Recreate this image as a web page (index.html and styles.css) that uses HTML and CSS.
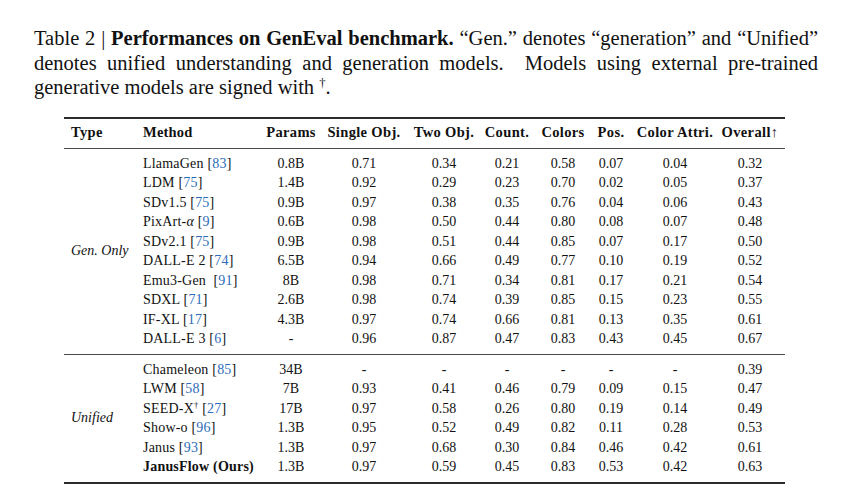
FILE: index.html
```html
<!DOCTYPE html>
<html lang="en">
<head>
<meta charset="utf-8">
<title>Table 2 | Performances on GenEval benchmark</title>
<link rel="stylesheet" href="styles.css">
</head>
<body>
<main class="page">
  <div class="caption">
    <div class="line just">Table 2 | <b>Performances on GenEval benchmark.</b> “Gen.” denotes “generation” and “Unified”</div>
    <div class="line just">denotes unified understanding and generation models.&nbsp; Models using external pre-trained</div>
    <div class="line">generative models are signed with <sup class="dag">†</sup>.</div>
  </div>

  <table class="results">
    <colgroup>
      <col class="c-type"><col class="c-method"><col class="c-params"><col class="c-single"><col class="c-two"><col class="c-count"><col class="c-colors"><col class="c-pos"><col class="c-attr"><col class="c-overall">
    </colgroup>
    <thead>
      <tr>
        <th class="left type">Type</th>
        <th class="left method">Method</th>
        <th>Params</th>
        <th>Single Obj.</th>
        <th>Two Obj.</th>
        <th>Count.</th>
        <th>Colors</th>
        <th>Pos.</th>
        <th>Color Attri.</th>
        <th class="last">Overall↑</th>
      </tr>
    </thead>
    <tbody class="group">
      <tr class="first"><td class="type" rowspan="10"><i>Gen. Only</i></td><td class="method">LlamaGen <span class="cite">[<a>83</a>]</span></td><td>0.8B</td><td>0.71</td><td>0.34</td><td>0.21</td><td>0.58</td><td>0.07</td><td>0.04</td><td class="last">0.32</td></tr>
      <tr><td class="method">LDM <span class="cite">[<a>75</a>]</span></td><td>1.4B</td><td>0.92</td><td>0.29</td><td>0.23</td><td>0.70</td><td>0.02</td><td>0.05</td><td class="last">0.37</td></tr>
      <tr><td class="method">SDv1.5 <span class="cite">[<a>75</a>]</span></td><td>0.9B</td><td>0.97</td><td>0.38</td><td>0.35</td><td>0.76</td><td>0.04</td><td>0.06</td><td class="last">0.43</td></tr>
      <tr><td class="method">PixArt-<i>α</i> <span class="cite">[<a>9</a>]</span></td><td>0.6B</td><td>0.98</td><td>0.50</td><td>0.44</td><td>0.80</td><td>0.08</td><td>0.07</td><td class="last">0.48</td></tr>
      <tr><td class="method">SDv2.1 <span class="cite">[<a>75</a>]</span></td><td>0.9B</td><td>0.98</td><td>0.51</td><td>0.44</td><td>0.85</td><td>0.07</td><td>0.17</td><td class="last">0.50</td></tr>
      <tr><td class="method">DALL-E 2 <span class="cite">[<a>74</a>]</span></td><td>6.5B</td><td>0.94</td><td>0.66</td><td>0.49</td><td>0.77</td><td>0.10</td><td>0.19</td><td class="last">0.52</td></tr>
      <tr><td class="method">Emu3-Gen&nbsp; <span class="cite">[<a>91</a>]</span></td><td>8B</td><td>0.98</td><td>0.71</td><td>0.34</td><td>0.81</td><td>0.17</td><td>0.21</td><td class="last">0.54</td></tr>
      <tr><td class="method">SDXL <span class="cite">[<a>71</a>]</span></td><td>2.6B</td><td>0.98</td><td>0.74</td><td>0.39</td><td>0.85</td><td>0.15</td><td>0.23</td><td class="last">0.55</td></tr>
      <tr><td class="method">IF-XL <span class="cite">[<a>17</a>]</span></td><td>4.3B</td><td>0.97</td><td>0.74</td><td>0.66</td><td>0.81</td><td>0.13</td><td>0.35</td><td class="last">0.61</td></tr>
      <tr class="end"><td class="method">DALL-E 3 <span class="cite">[<a>6</a>]</span></td><td>-</td><td>0.96</td><td>0.87</td><td>0.47</td><td>0.83</td><td>0.43</td><td>0.45</td><td class="last">0.67</td></tr>
    </tbody>
    <tbody class="group">
      <tr class="first"><td class="type" rowspan="6"><i>Unified</i></td><td class="method">Chameleon <span class="cite">[<a>85</a>]</span></td><td>34B</td><td>-</td><td>-</td><td>-</td><td>-</td><td>-</td><td>-</td><td class="last">0.39</td></tr>
      <tr><td class="method">LWM <span class="cite">[<a>58</a>]</span></td><td>7B</td><td>0.93</td><td>0.41</td><td>0.46</td><td>0.79</td><td>0.09</td><td>0.15</td><td class="last">0.47</td></tr>
      <tr><td class="method">SEED-X<sup class="dag">†</sup> <span class="cite">[<a>27</a>]</span></td><td>17B</td><td>0.97</td><td>0.58</td><td>0.26</td><td>0.80</td><td>0.19</td><td>0.14</td><td class="last">0.49</td></tr>
      <tr><td class="method">Show-o <span class="cite">[<a>96</a>]</span></td><td>1.3B</td><td>0.95</td><td>0.52</td><td>0.49</td><td>0.82</td><td>0.11</td><td>0.28</td><td class="last">0.53</td></tr>
      <tr><td class="method">Janus <span class="cite">[<a>93</a>]</span></td><td>1.3B</td><td>0.97</td><td>0.68</td><td>0.30</td><td>0.84</td><td>0.46</td><td>0.42</td><td class="last">0.61</td></tr>
      <tr class="end"><td class="method"><b>JanusFlow (Ours)</b></td><td>1.3B</td><td>0.97</td><td>0.59</td><td>0.45</td><td>0.83</td><td>0.53</td><td>0.42</td><td class="last">0.63</td></tr>
    </tbody>
  </table>
</main>
</body>
</html>
```

FILE: styles.css
```css
html, body {
  margin: 0;
  padding: 0;
  background: #ffffff;
}

body {
  width: 850px;
  height: 500px;
  overflow: hidden;
  color: #111111;
  font-family: "Liberation Serif", "Times New Roman", serif;
}

.page {
  padding: 26px 32px 0 34px;
}

.caption {
  width: 784px;
  font-size: 20.5px;
  line-height: 24.5px;
}

.caption .line {
  white-space: nowrap;
}

.caption .just {
  white-space: normal;
  text-align: justify;
  text-align-last: justify;
}

.dag {
  font-size: 0.62em;
  line-height: 0;
  vertical-align: 0.55em;
}

.results {
  margin: 17px 0 0 30px;
  width: 721px;
  table-layout: fixed;
  border-collapse: collapse;
  font-size: 14px;
  line-height: 19.5px;
}

.c-type { width: 73px; }
.c-method { width: 125px; }
.c-params { width: 58px; }
.c-single { width: 88px; }
.c-two { width: 72px; }
.c-count { width: 54px; }
.c-colors { width: 58px; }
.c-pos { width: 38px; }
.c-attr { width: 90px; }
.c-overall { width: 65px; }

.results thead tr {
  border-top: 2px solid #2b2b2b;
  border-bottom: 1.3px solid #4a4a4a;
}

.results th {
  font-weight: bold;
  font-size: 14.5px;
  letter-spacing: 0.35px;
  height: 29px;
  padding: 0;
  text-align: center;
  white-space: nowrap;
  vertical-align: middle;
}

.results td {
  padding: 0;
  height: 19.5px;
  text-align: center;
  white-space: nowrap;
  vertical-align: middle;
}

.results .left {
  text-align: left;
}

.results .type {
  text-align: left;
  padding-left: 7px;
}

.results .method {
  text-align: left;
  padding-left: 6px;
  letter-spacing: 0.2px;
}

.results .last {
  padding-right: 5px;
}

.results tr.first td {
  padding-top: 5px;
}

.results tr.end td {
  padding-bottom: 5px;
}

.results tr.first td.type {
  padding-bottom: 5px;
}

.results tbody + tbody {
  border-top: 1.3px solid #4a4a4a;
}

.results tbody:last-child {
  border-bottom: 2px solid #2b2b2b;
}

.cite a {
  color: #2c6cb8;
}
```
